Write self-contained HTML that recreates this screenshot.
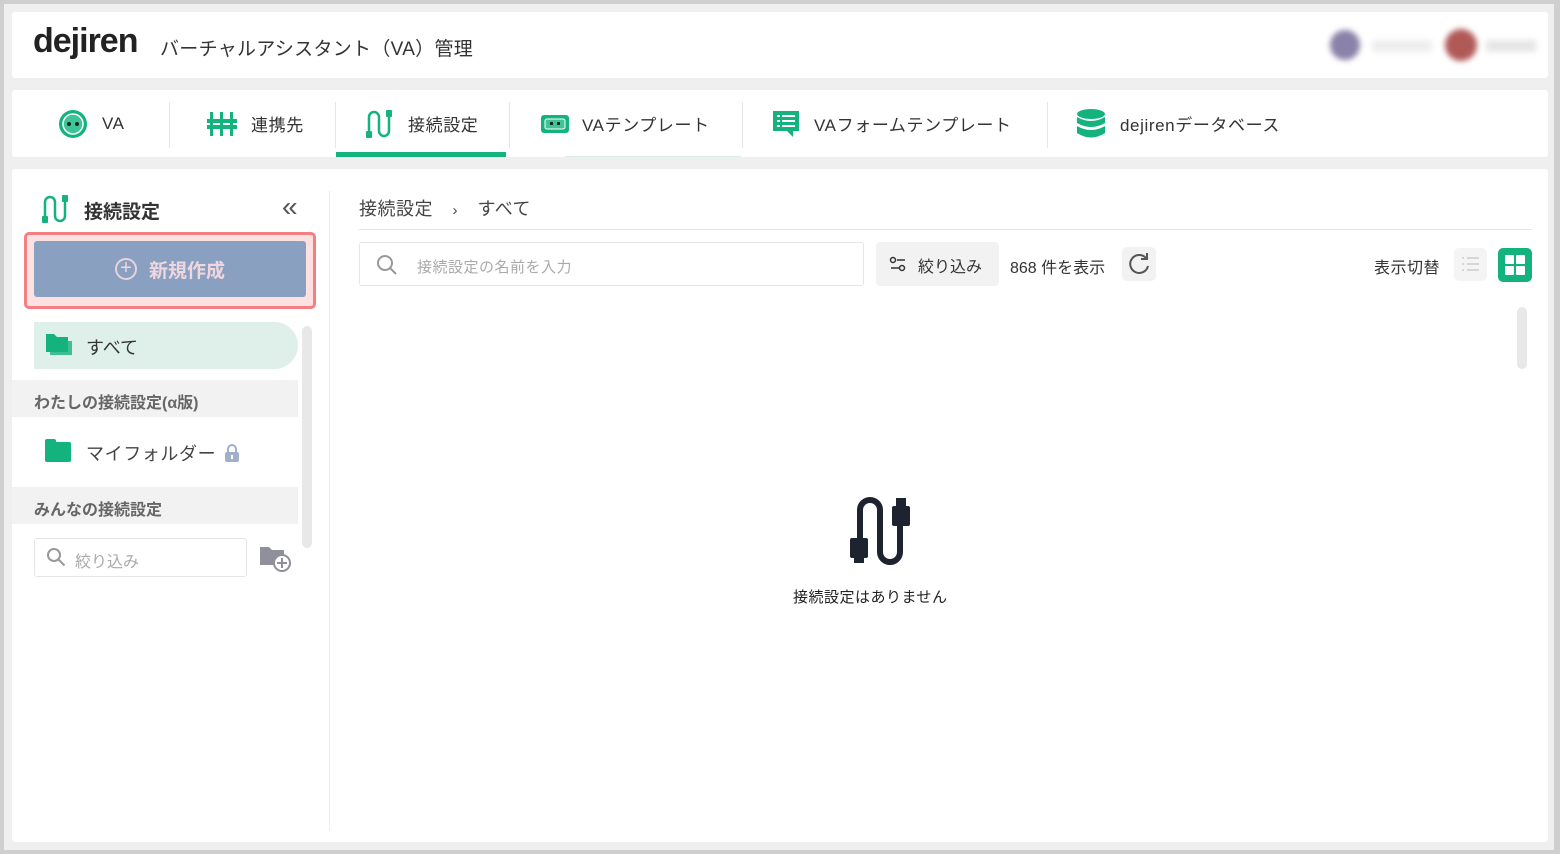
<!DOCTYPE html>
<html><head><meta charset="utf-8"><style>
*{box-sizing:border-box;margin:0;padding:0}
body{width:1560px;height:854px;background:#cfcfcf;font-family:"Liberation Sans","Noto Sans CJK JP",sans-serif;color:#333;position:relative;overflow:hidden}
.frame{position:absolute;left:4px;top:4px;width:1550px;height:846px;background:#efefef}
.card{position:absolute;background:#fff;border-radius:3px}
.abs{position:absolute}
.tab{position:absolute;top:0;height:67px;display:flex;align-items:center;font-size:17px;color:#333;letter-spacing:.6px}
.sep{position:absolute;top:12px;width:1px;height:46px;background:#e4e6ea}
</style></head><body>
<div class="frame"></div>
<div class="card" style="left:12px;top:12px;width:1536px;height:66px">
 <div class="abs" style="left:21px;top:10px;font-size:34px;font-weight:bold;letter-spacing:-1px;color:#222">dejiren</div>
 <div class="abs" style="left:148px;top:22px;font-size:19px;color:#333;letter-spacing:.3px">バーチャルアシスタント（VA）管理</div>
 <div class="abs" style="left:1318px;top:18px;width:30px;height:30px;border-radius:50%;background:#8a82a8;filter:blur(3px)"></div>
 <div class="abs" style="left:1360px;top:28px;width:60px;height:12px;background:#eee;filter:blur(3px)"></div>
 <div class="abs" style="left:1433px;top:17px;width:32px;height:32px;border-radius:50%;background:#b05a58;filter:blur(3px)"></div>
 <div class="abs" style="left:1474px;top:28px;width:50px;height:12px;background:#e6e6e6;filter:blur(3px)"></div>
</div>
<div class="card" style="left:12px;top:90px;width:1536px;height:67px">
 <div class="tab" style="left:46px"><svg width="30" height="30" viewBox="0 0 30 30"><circle cx="15" cy="15" r="14" fill="#14b37d"/><circle cx="15" cy="15" r="10" fill="#3cc596" stroke="#fff" stroke-width="1.5"/><circle cx="11" cy="15" r="2" fill="#222"/><circle cx="19" cy="15" r="2" fill="#222"/></svg><span style="margin-left:14px">VA</span></div>
 <div class="sep" style="left:157px"></div>
 <div class="tab" style="left:195px"><svg width="30" height="28" viewBox="0 0 30 28"><g fill="#14b37d"><rect x="3" y="2" width="3" height="24"/><rect x="13" y="2" width="3" height="24"/><rect x="23" y="2" width="3" height="24"/><rect x="0" y="9" width="30" height="4"/><rect x="0" y="15" width="30" height="4"/></g></svg><span style="margin-left:14px">連携先</span></div>
 <div class="sep" style="left:323px"></div>
 <div class="tab" style="left:352px"><svg width="30" height="32" viewBox="0 0 30 32"><path d="M5 24V9a5 5 0 0 1 10 0v14a5 5 0 0 0 10 0V8" fill="none" stroke="#14b37d" stroke-width="2.5"/><rect x="2" y="23" width="6" height="7" rx="1" fill="#14b37d"/><rect x="22" y="2" width="6" height="7" rx="1" fill="#14b37d"/></svg><span style="margin-left:14px">接続設定</span></div>
 <div class="abs" style="left:324px;top:62px;width:170px;height:5px;background:#14b37d"></div>
 <div class="sep" style="left:497px"></div>
 <div class="tab" style="left:528px"><svg width="30" height="22" viewBox="0 0 30 22"><rect x="1" y="2" width="28" height="18" rx="3" fill="#14b37d"/><rect x="5" y="6" width="20" height="10" rx="2" fill="#3cc596" stroke="#fff" stroke-width="1"/><rect x="10" y="9" width="3" height="3" fill="#222"/><rect x="17" y="9" width="3" height="3" fill="#222"/></svg><span style="margin-left:12px">VAテンプレート</span></div>
 <div class="abs" style="left:553px;top:66px;width:176px;height:1px;background:#d6efe5"></div>
 <div class="sep" style="left:730px"></div>
 <div class="tab" style="left:760px"><svg width="28" height="30" viewBox="0 0 28 30"><path d="M1 2h26v20h-6v6l-6-6H1z" fill="#14b37d"/><g fill="#fff"><rect x="5" y="6" width="3" height="2"/><rect x="10" y="6" width="13" height="2"/><rect x="5" y="11" width="3" height="2"/><rect x="10" y="11" width="13" height="2"/><rect x="5" y="16" width="3" height="2"/><rect x="10" y="16" width="13" height="2"/></g></svg><span style="margin-left:14px">VAフォームテンプレート</span></div>
 <div class="sep" style="left:1035px"></div>
 <div class="tab" style="left:1064px"><svg width="30" height="32" viewBox="0 0 30 32"><g fill="#14b37d"><ellipse cx="15" cy="6" rx="14" ry="5"/><path d="M1 9q14 8 28 0v6q-14 8-28 0z"/><path d="M1 18q14 8 28 0v7q-14 9-28 0z"/></g></svg><span style="margin-left:14px">dejirenデータベース</span></div>
</div>
<div class="card" style="left:12px;top:169px;width:1536px;height:673px">
 <div class="abs" style="left:28px;top:24px"><svg width="30" height="32" viewBox="0 0 30 32"><path d="M5 24V9a5 5 0 0 1 10 0v14a5 5 0 0 0 10 0V8" fill="none" stroke="#14b37d" stroke-width="2.5"/><rect x="2" y="23" width="6" height="7" rx="1" fill="#14b37d"/><rect x="22" y="2" width="6" height="7" rx="1" fill="#14b37d"/></svg></div>
 <div class="abs" style="left:72px;top:28px;font-size:19px;font-weight:bold;color:#333">接続設定</div>
 <div class="abs" style="left:270px;top:22px;font-size:28px;color:#555">«</div>
 <div class="abs" style="left:12px;top:63px;width:292px;height:77px;border:3px solid #f47f82;border-radius:5px;background:#fde0e0"></div>
 <div class="abs" style="left:22px;top:72px;width:272px;height:56px;background:#8aa0c0;border-radius:3px;display:flex;align-items:center;justify-content:center;color:#f0d6de;font-size:19px;font-weight:bold"><span style="display:inline-block;width:22px;height:22px;border:2px solid #e6d2dc;border-radius:50%;text-align:center;line-height:17px;font-size:20px;font-weight:normal;margin-right:12px">+</span>新規作成</div>
 <div class="abs" style="left:22px;top:153px;width:264px;height:47px;background:#dff0ea;border-radius:0 24px 24px 0"></div>
 <div class="abs" style="left:34px;top:165px"><svg width="30" height="24" viewBox="0 0 30 24"><path d="M4 4h8l3 3h11v14H4z" fill="#14b37d" opacity=".8"/><path d="M0 0h8l3 3h11v15H0z" fill="#14b37d"/></svg></div>
 <div class="abs" style="left:74px;top:165px;font-size:18px;color:#333">すべて</div>
 <div class="abs" style="left:290px;top:157px;width:10px;height:222px;background:#e8e8e8;border-radius:5px"></div>
 <div class="abs" style="left:0;top:211px;width:286px;height:37px;background:#f2f2f2;font-size:16px;font-weight:bold;color:#666;padding:9px 0 0 22px">わたしの接続設定(α版)</div>
 <div class="abs" style="left:33px;top:273px;width:26px;height:20px;background:#14b37d;border-radius:2px"></div>
 <div class="abs" style="left:33px;top:270px;width:11px;height:5px;background:#14b37d;border-radius:2px 2px 0 0"></div>
 <div class="abs" style="left:74px;top:271px;font-size:18px;color:#444;letter-spacing:.6px">マイフォルダー</div>
 <div class="abs" style="left:213px;top:275px"><svg width="14" height="18" viewBox="0 0 14 18"><path d="M3 8V5a4 4 0 0 1 8 0v3" fill="none" stroke="#9fb0c8" stroke-width="2"/><rect x="0" y="8" width="14" height="10" rx="2" fill="#9fb0c8"/><rect x="6" y="11" width="2" height="4" fill="#fff"/></svg></div>
 <div class="abs" style="left:0;top:318px;width:286px;height:37px;background:#f2f2f2;font-size:16px;font-weight:bold;color:#666;padding:9px 0 0 22px">みんなの接続設定</div>
 <div class="abs" style="left:22px;top:369px;width:213px;height:39px;border:1px solid #e6e6e6;border-radius:3px;font-size:16px;color:#aaa;padding:9px 0 0 40px">絞り込み</div>
 <div class="abs" style="left:34px;top:378px"><svg width="20" height="20" viewBox="0 0 20 20"><circle cx="8" cy="8" r="6" fill="none" stroke="#999" stroke-width="2"/><path d="M12.5 12.5l6 6" stroke="#999" stroke-width="2"/></svg></div>
 <div class="abs" style="left:248px;top:376px"><svg width="32" height="28" viewBox="0 0 32 28"><path d="M0 2h9l3 3h12v15H0z" fill="#8f9099"/><circle cx="22" cy="18" r="8" fill="#fff" stroke="#8f9099" stroke-width="2"/><path d="M22 13v10M17 18h10" stroke="#8f9099" stroke-width="2"/></svg></div>
 <div class="abs" style="left:317px;top:22px;width:1px;height:640px;background:#eceef2"></div>
 <div class="abs" style="left:347px;top:26px;font-size:18px;color:#444;letter-spacing:.5px">接続設定 <span style="margin:0 14px 0 14px;font-size:15px">›</span> すべて</div>
 <div class="abs" style="left:347px;top:60px;width:1173px;height:1px;background:#e4e8ee"></div>
 <div class="abs" style="left:347px;top:73px;width:505px;height:44px;border:1px solid #e6e6e6;border-radius:3px;font-size:15px;color:#aaa;padding:13px 0 0 57px;letter-spacing:.5px">接続設定の名前を入力</div>
 <div class="abs" style="left:364px;top:85px"><svg width="22" height="22" viewBox="0 0 22 22"><circle cx="9" cy="9" r="7" fill="none" stroke="#999" stroke-width="2"/><path d="M14 14l6 6" stroke="#999" stroke-width="2"/></svg></div>
 <div class="abs" style="left:864px;top:73px;width:123px;height:44px;background:#f2f2f2;border-radius:4px;font-size:16px;color:#333;padding:11px 0 0 42px">絞り込み</div>
 <div class="abs" style="left:877px;top:87px"><svg width="18" height="16" viewBox="0 0 18 16"><circle cx="4" cy="4" r="2.5" fill="none" stroke="#333" stroke-width="1.5"/><path d="M8 4h8M2 12h8" stroke="#333" stroke-width="1.5"/><circle cx="13" cy="12" r="2.5" fill="none" stroke="#333" stroke-width="1.5"/></svg></div>
 <div class="abs" style="left:998px;top:85px;font-size:16px;color:#333">868 件を表示</div>
 <div class="abs" style="left:1110px;top:78px;width:34px;height:34px;background:#f2f2f2;border-radius:5px"><svg width="34" height="34" viewBox="0 0 34 34"><path d="M24 11a9 9 0 1 0 2 8" fill="none" stroke="#555" stroke-width="2"/><path d="M25 6v6h-6" fill="none" stroke="#555" stroke-width="2"/></svg></div>
 <div class="abs" style="left:1362px;top:85px;font-size:16px;color:#333;letter-spacing:.5px">表示切替</div>
 <div class="abs" style="left:1442px;top:79px;width:33px;height:33px;background:#f4f4f4;border-radius:5px"><svg width="33" height="33" viewBox="0 0 33 33"><g stroke="#ccc" stroke-width="1.5"><path d="M8 10h2M13 10h12M8 16h2M13 16h12M8 22h2M13 22h12"/></g></svg></div>
 <div class="abs" style="left:1486px;top:79px;width:34px;height:34px;background:#14b37d;border-radius:5px"><svg width="34" height="34" viewBox="0 0 34 34"><g fill="#fff"><rect x="7" y="7" width="9" height="9" rx="1"/><rect x="18" y="7" width="9" height="9" rx="1"/><rect x="7" y="18" width="9" height="9" rx="1"/><rect x="18" y="18" width="9" height="9" rx="1"/></g></svg></div>
 <div class="abs" style="left:1505px;top:138px;width:10px;height:62px;background:#e8e8e8;border-radius:5px"></div>
 <div class="abs" style="left:836px;top:327px"><svg width="66" height="72" viewBox="0 0 66 72"><path d="M12 52V14a10 10 0 0 1 20 0v42a10 10 0 0 0 20 0V18" fill="none" stroke="#1e2330" stroke-width="6"/><rect x="2" y="42" width="18" height="20" rx="2" fill="#1e2330"/><rect x="6" y="60" width="10" height="7" fill="#1e2330"/><rect x="44" y="10" width="18" height="20" rx="2" fill="#1e2330"/><rect x="48" y="2" width="10" height="10" fill="#1e2330"/></svg></div>
 <div class="abs" style="left:781px;top:417px;font-size:15px;color:#222;letter-spacing:.5px">接続設定はありません</div>
</div>
</body></html>
